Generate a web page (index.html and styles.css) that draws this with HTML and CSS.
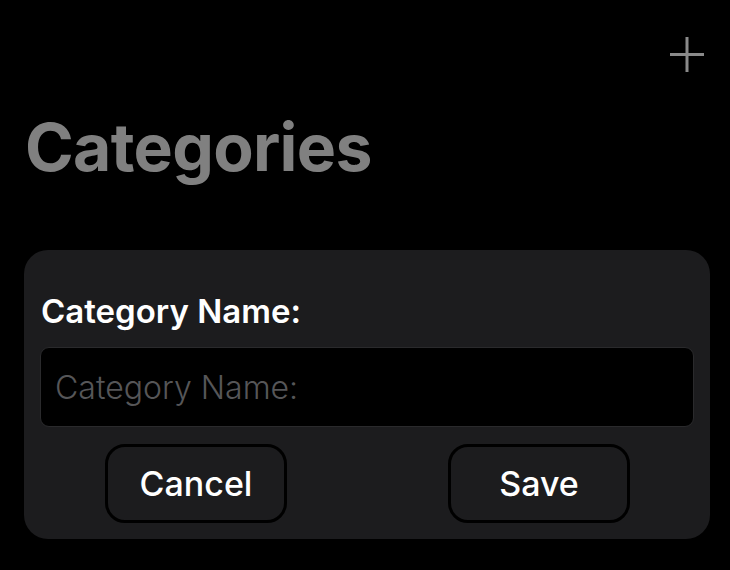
FILE: index.html
```html
<!DOCTYPE html>
<html lang="en">
<head>
    <meta charset="UTF-8">
    <meta name="viewport" content="width=device-width, initial-scale=1.0">
    <title>Categories</title>
    <link rel="stylesheet" href="styles.css">
</head>
<body>
    <div class="screen">
        <!-- top bar with add button -->
        <div class="topbar">
            <div class="add-btn">
                <svg width="36" height="37" viewBox="0 0 36 37">
                    <path d="M18 1V36M1 18.5H35" stroke="#8a8a8a" stroke-width="3" fill="none"/>
                </svg>
            </div>
        </div>
        <h1 class="title">Categories</h1>

        <div class="card">
            <div class="label">Category Name:</div>
            <input class="field" type="text" placeholder="Category Name:">
            <div class="actions">
                <button class="btn btn-cancel">Cancel</button>
                <button class="btn btn-save">Save</button>
            </div>
        </div>
    </div>
</body>
</html>
```

FILE: styles.css
```css
body{
    margin: 0;
    background: #000;
    font-family: Inter, "Liberation Sans", sans-serif;
}
.screen{
    width: 730px;
    height: 570px;
    overflow: hidden;
}
/* top bar */
.topbar{
    display: flex;
    justify-content: flex-end;
    padding: 36px 25px 0 0;
    height: 37px;
}
.add-btn{
    width: 36px;
    height: 37px;
}
.add-btn svg{
    display: block;
}
/* big title */
.title{
    margin: 34px 0 0 25px;
    font-size: 66px;
    font-weight: 700;
    line-height: 80px;
    color: #808080;
    letter-spacing: -0.7px;
}
/* form card */
.card{
    margin: 63px 20px 0 24px;
    background: #1c1c1e;
    border-radius: 24px;
    padding: 43px 16px 16px 16px;
}
.label{
    font-weight: 600;
    font-size: 33px;
    line-height: 36px;
    color: #fff;
    padding-left: 1px;
}
.field{
    display: block;
    box-sizing: border-box;
    width: 100%;
    height: 80px;
    margin-top: 18px;
    background: #000;
    border: 1px solid #2a2a2c;
    border-radius: 9px;
    padding: 0 14px;
    font-family: Inter, "Liberation Sans", sans-serif;
    font-weight: 300;
    font-size: 32px;
    color: #fff;
    outline: none;
}
.field::placeholder{
    color: #565658;
}
.actions{
    display: flex;
    margin-top: 17px;
    padding-left: 65px;
    gap: 161px;
}
.btn{
    width: 182px;
    height: 79px;
    box-sizing: border-box;
    background: #1c1c1e;
    border: 3px solid #000;
    border-radius: 20px;
    color: #fff;
    font-family: Inter, "Liberation Sans", sans-serif;
    font-weight: 500;
    font-size: 34px;
    padding: 0;
}
```
